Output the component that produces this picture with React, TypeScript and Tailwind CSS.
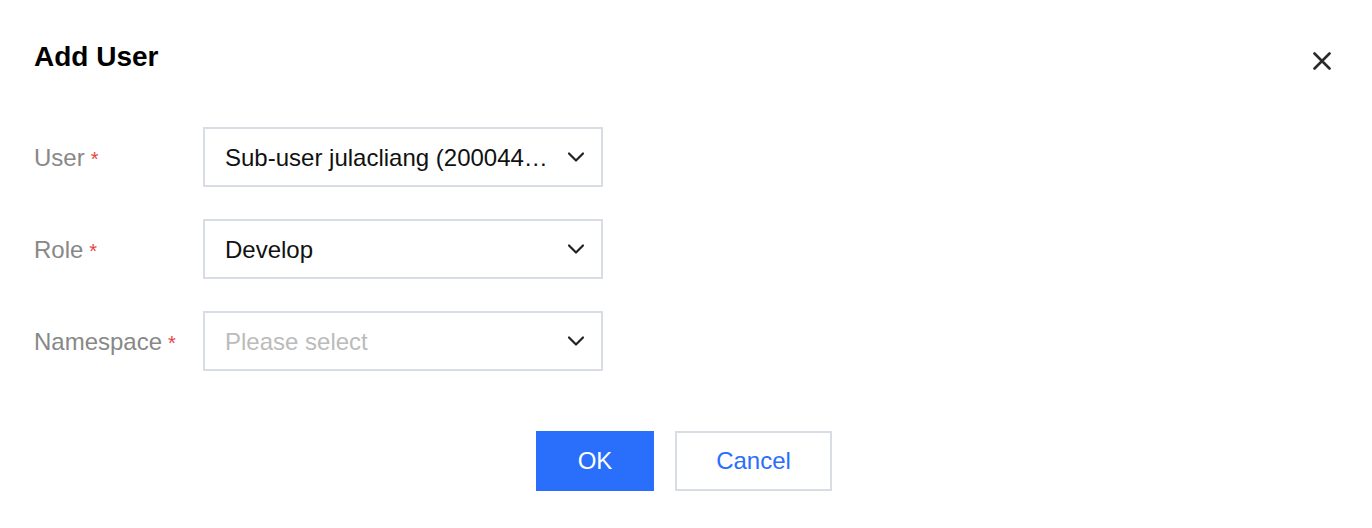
import React from 'react';

const Chevron = () => (
  <svg width="18" height="12" viewBox="0 0 18 12" fill="none" className="shrink-0">
    <path d="M2 2.5 L9 9.5 L16 2.5" stroke="#222" strokeWidth="2.2" strokeLinecap="round" strokeLinejoin="round" />
  </svg>
);

function Field({ label, value, placeholder }: { label: string; value?: string; placeholder?: string }) {
  return (
    <div className="flex items-center">
      <div className="w-[169px] text-[24px] text-[#888888] flex items-center pt-[2px]">
        {label}
        <span className="text-[#e54545] text-[20px] ml-[6px] relative top-[1px]">*</span>
      </div>
      <div className="w-[400px] h-[60px] border-2 border-[#d8dce4] flex items-center pl-[20px] pr-[16px]">
        <span className={`flex-1 whitespace-nowrap text-[24px] pt-[1px] ${value ? 'text-[#111]' : 'text-[#bbbbbb]'}`}>
          {value || placeholder}
        </span>
        <div className="ml-[14px]">
          <Chevron />
        </div>
      </div>
    </div>
  );
}

export default function App() {
  return (
    <div className="w-[1372px] h-[528px] bg-white font-['Liberation_Sans',Arial,sans-serif] px-[34px] pt-[39px]">
      <div className="flex items-start justify-between">
        <h1 className="text-[28px] font-bold text-black leading-[36px]">Add User</h1>
        <button className="mt-[13px] mr-[7px]">
          <svg width="18" height="18" viewBox="0 0 18 18" fill="none">
            <path d="M1.5 1.5 L16.5 16.5 M16.5 1.5 L1.5 16.5" stroke="#2a2a2a" strokeWidth="2.6" strokeLinecap="round" />
          </svg>
        </button>
      </div>

      <div className="mt-[52px] flex flex-col gap-[32px]">
        <Field label="User" value="Sub-user julacliang (200044…" />
        <Field label="Role" value="Develop" />
        <Field label="Namespace" placeholder="Please select" />
      </div>

      <div className="mt-[60px] flex justify-center gap-[21px] pr-[4px]">
        <button className="w-[118px] h-[60px] bg-[#2a6efc] text-white text-[24px]">OK</button>
        <button className="w-[157px] h-[60px] border-2 border-[#d8dce4] text-[#2a6efc] text-[24px]">Cancel</button>
      </div>
    </div>
  );
}
